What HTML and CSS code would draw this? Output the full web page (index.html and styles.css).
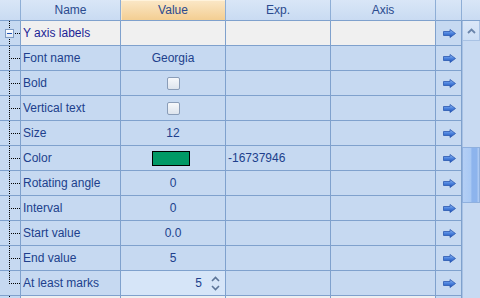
FILE: index.html
```html
<!DOCTYPE html>
<html lang="en">
<head>
    <meta charset="UTF-8">
    <title>Axis properties</title>
    <link rel="stylesheet" href="styles.css">
</head>
<body>
    <div class="grid">
        <div class="head">
            <div class="hc"></div>
            <div class="hc">Name</div>
            <div class="hc hc-sel">Value</div>
            <div class="hc">Exp.</div>
            <div class="hc">Axis</div>
            <div class="hc"></div>
            <div class="hc hc-last"></div>
        </div>
        <div class="body">
            <div class="rows">
                <div class="row root">
                    <div class="tree tree-root"><span class="toggle"><span class="minus"></span></span></div>
                    <div class="cell name">Y axis labels</div>
                    <div class="cell"></div>
                    <div class="cell"></div>
                    <div class="cell"></div>
                    <div class="cell go"><svg width="13" height="9"><use href="#arrow"/></svg></div>
                </div>
                <div class="row">
                    <div class="tree"></div>
                    <div class="cell name">Font name</div>
                    <div class="cell val">Georgia</div>
                    <div class="cell"></div>
                    <div class="cell"></div>
                    <div class="cell go"><svg width="13" height="9"><use href="#arrow"/></svg></div>
                </div>
                <div class="row">
                    <div class="tree"></div>
                    <div class="cell name">Bold</div>
                    <div class="cell val"><span class="check"></span></div>
                    <div class="cell"></div>
                    <div class="cell"></div>
                    <div class="cell go"><svg width="13" height="9"><use href="#arrow"/></svg></div>
                </div>
                <div class="row">
                    <div class="tree"></div>
                    <div class="cell name">Vertical text</div>
                    <div class="cell val"><span class="check"></span></div>
                    <div class="cell"></div>
                    <div class="cell"></div>
                    <div class="cell go"><svg width="13" height="9"><use href="#arrow"/></svg></div>
                </div>
                <div class="row">
                    <div class="tree"></div>
                    <div class="cell name">Size</div>
                    <div class="cell val">12</div>
                    <div class="cell"></div>
                    <div class="cell"></div>
                    <div class="cell go"><svg width="13" height="9"><use href="#arrow"/></svg></div>
                </div>
                <div class="row">
                    <div class="tree"></div>
                    <div class="cell name">Color</div>
                    <div class="cell val"><span class="swatch"></span></div>
                    <div class="cell exp">-16737946</div>
                    <div class="cell"></div>
                    <div class="cell go"><svg width="13" height="9"><use href="#arrow"/></svg></div>
                </div>
                <div class="row">
                    <div class="tree"></div>
                    <div class="cell name">Rotating angle</div>
                    <div class="cell val">0</div>
                    <div class="cell"></div>
                    <div class="cell"></div>
                    <div class="cell go"><svg width="13" height="9"><use href="#arrow"/></svg></div>
                </div>
                <div class="row">
                    <div class="tree"></div>
                    <div class="cell name">Interval</div>
                    <div class="cell val">0</div>
                    <div class="cell"></div>
                    <div class="cell"></div>
                    <div class="cell go"><svg width="13" height="9"><use href="#arrow"/></svg></div>
                </div>
                <div class="row">
                    <div class="tree"></div>
                    <div class="cell name">Start value</div>
                    <div class="cell val">0.0</div>
                    <div class="cell"></div>
                    <div class="cell"></div>
                    <div class="cell go"><svg width="13" height="9"><use href="#arrow"/></svg></div>
                </div>
                <div class="row">
                    <div class="tree"></div>
                    <div class="cell name">End value</div>
                    <div class="cell val">5</div>
                    <div class="cell"></div>
                    <div class="cell"></div>
                    <div class="cell go"><svg width="13" height="9"><use href="#arrow"/></svg></div>
                </div>
                <div class="row">
                    <div class="tree tree-end"></div>
                    <div class="cell name">At least marks</div>
                    <div class="cell spin">
                        <span>5</span>
                        <span class="spin-btns">
                            <svg width="9" height="6"><path d="M1 5 L4.5 1.5 L8 5" fill="none" stroke="#5d7598" stroke-width="1.6"/></svg>
                            <svg width="9" height="6"><path d="M1 1 L4.5 4.5 L8 1" fill="none" stroke="#5d7598" stroke-width="1.6"/></svg>
                        </span>
                    </div>
                    <div class="cell"></div>
                    <div class="cell"></div>
                    <div class="cell go"><svg width="13" height="9"><use href="#arrow"/></svg></div>
                </div>
                <div class="row root">
                    <div class="tree tree-next"></div>
                    <div class="cell name"></div>
                    <div class="cell"></div>
                    <div class="cell"></div>
                    <div class="cell"></div>
                    <div class="cell go"></div>
                </div>
            </div>
            <div class="scroll">
                <div class="sb-up"><svg width="9" height="6"><path d="M1 5 L4.5 1.5 L8 5" fill="none" stroke="#6a85ab" stroke-width="1.8"/></svg></div>
                <div class="sb-track sb-top"></div>
                <div class="sb-thumb"></div>
                <div class="sb-track"></div>
            </div>
        </div>
    </div>

    <svg width="0" height="0" class="defs">
        <defs>
            <linearGradient id="arrowFill" x1="0" y1="0" x2="0" y2="1">
                <stop offset="0" stop-color="#9cc0f4"/>
                <stop offset="0.45" stop-color="#4f86e0"/>
                <stop offset="1" stop-color="#1d4fb5"/>
            </linearGradient>
            <symbol id="arrow" viewBox="0 0 13 9">
                <path d="M0.5 2.5 H7 V0.5 L12.5 4.5 L7 8.5 V6.5 H0.5 Z" fill="url(#arrowFill)" stroke="#2a58b0" stroke-width="0.8"/>
            </symbol>
        </defs>
    </svg>
</body>
</html>
```

FILE: styles.css
```css
* {
    margin: 0;
    padding: 0;
    box-sizing: border-box;
}
body {
    width: 480px;
    height: 298px;
    overflow: hidden;
    font-family: "Liberation Sans", Arial, sans-serif;
    font-size: 12px;
    color: #203f8c;
    background: #c6d9f1;
}
.defs {
    position: absolute;
}
.grid {
    display: flex;
    flex-direction: column;
}
.head {
    display: grid;
    grid-template-columns: 21px 100px 105px 105px 105px 26px 18px;
    height: 21px;
}
.hc {
    border-right: 1px solid #8eaed6;
    border-bottom: 1px solid #7fa1cd;
    background: linear-gradient(#d9e6f7, #c9dbf2);
    color: #2a4a8e;
    text-align: center;
    line-height: 20px;
}
.hc-sel {
    background: linear-gradient(#fbe8c8, #f3ce92);
    box-shadow: inset 0 1px 0 #fff3dc, inset 1px 0 0 #fbe6c2;
}
.hc-last {
    border-right: none;
}
.body {
    display: flex;
    height: 277px;
    overflow: hidden;
}
.rows {
    width: 462px;
    display: flex;
    flex-direction: column;
}
.row {
    display: grid;
    grid-template-columns: 21px 100px 105px 105px 105px 26px;
    height: 25px;
    flex: none;
}
.cell {
    border-right: 1px solid #7fa1cd;
    border-bottom: 1px solid #7fa1cd;
    line-height: 24px;
    white-space: nowrap;
    overflow: hidden;
}
.root .cell {
    background: #f0f0f0;
}
.root .go {
    background: #c6d9f1;
}
.name {
    padding-left: 2px;
}
.root .name {
    color: #1c1f96;
}
.val {
    display: flex;
    align-items: center;
    justify-content: center;
}
.exp {
    padding-left: 2px;
}
.go {
    display: flex;
    align-items: center;
    justify-content: center;
    padding-left: 1px;
}

/* tree connectors */
.tree {
    border-right: 1px solid #7fa1cd;
    border-bottom: 1px solid #7fa1cd;
    background-image:
        repeating-linear-gradient(to bottom, #000 0 1px, transparent 1px 2px),
        repeating-linear-gradient(to right, #000 0 1px, transparent 1px 2px);
    background-repeat: no-repeat;
    background-position: 9px 0, 11px 12px;
    background-size: 1px 25px, 9px 1px;
}
.tree-end {
    background-size: 1px 13px, 9px 1px;
}
.tree-next {
    background-size: 1px 25px, 0 0;
}
.tree-root {
    display: flex;
    align-items: center;
    background-position: 9px 0, 15px 12px;
    background-size: 1px 25px, 5px 1px;
}
.toggle {
    width: 9px;
    height: 9px;
    margin-left: 5px;
    margin-top: 1px;
    border: 1px solid #7f9cc4;
    background: linear-gradient(#ffffff, #dfe8f4);
    display: flex;
    align-items: center;
    justify-content: center;
}
.minus {
    width: 5px;
    height: 1px;
    background: #2456b8;
}

.check {
    width: 13px;
    height: 13px;
    border: 1px solid #8a9db8;
    border-radius: 2px;
    background: linear-gradient(#f6f8fb, #dde4ed);
}
.swatch {
    width: 38px;
    height: 15px;
    margin-right: 5px;
    border: 1px solid #000;
    background: #009966;
}
.spin {
    background: #d6e5f8;
    display: flex;
    align-items: center;
    justify-content: flex-end;
    padding-right: 5px;
}
.spin-btns {
    display: flex;
    flex-direction: column;
    gap: 3px;
    margin-left: 9px;
}
.spin-btns svg {
    display: block;
}

/* scrollbar */
.scroll {
    width: 18px;
    display: flex;
    flex-direction: column;
    background: #c8daf2;
}
.sb-up {
    height: 20px;
    flex: none;
    border: 1px solid #a9c2e4;
    border-top: none;
    background: linear-gradient(#dbe7f8, #cddff5);
    display: flex;
    align-items: center;
    justify-content: center;
}
.sb-track {
    flex: 1;
    border-left: 1px solid #a9c2e4;
}
.sb-top {
    height: 106px;
    flex: none;
}
.sb-thumb {
    height: 56px;
    flex: none;
    border: 1px solid #8fb0de;
    background: linear-gradient(to right, #b4cff5 0, #a9c9f4 50%, #8db4ed 55%, #8db4ed 85%, #b5cff4 100%);
}
```
